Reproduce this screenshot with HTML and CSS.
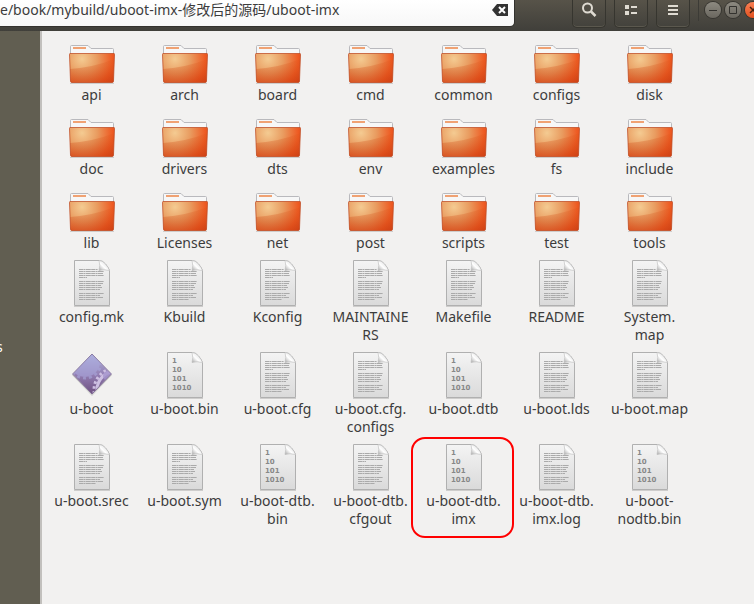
FILE: index.html
```
<!DOCTYPE html>
<html lang="zh-CN">
<head>
<meta charset="utf-8">
<title>uboot-imx</title>
<link rel="stylesheet" href="styles.css">
</head>
<body>
<svg class="defs" aria-hidden="true">
  <defs>
    <radialGradient id="orange" gradientUnits="userSpaceOnUse" cx="14" cy="25" r="38">
      <stop offset="0" stop-color="#f4cb92"/><stop offset=".4" stop-color="#e99c60"/><stop offset=".8" stop-color="#ee5a22"/><stop offset="1" stop-color="#d9481a"/>
    </radialGradient>
    <linearGradient id="shade" x1="0" y1="0" x2="0" y2="1">
      <stop offset="0" stop-color="#d8561a" stop-opacity=".15"/><stop offset="1" stop-color="#c83c10" stop-opacity=".5"/>
    </linearGradient>
    <linearGradient id="paper" x1="0" y1="0" x2="0" y2="1">
      <stop offset="0" stop-color="#f4f4f4"/><stop offset="1" stop-color="#dadada"/>
    </linearGradient>
    <linearGradient id="fold" x1="0" y1="1" x2="1" y2="0">
      <stop offset="0" stop-color="#a5a5a5"/><stop offset=".4" stop-color="#fff"/><stop offset="1" stop-color="#ccc"/>
    </linearGradient>
    <linearGradient id="violet" x1="0" y1="0" x2="0" y2="1">
      <stop offset="0" stop-color="#b9c6ea"/><stop offset=".5" stop-color="#9480b5"/><stop offset="1" stop-color="#62406f"/>
    </linearGradient>
    <clipPath id="diamond"><path d="M24 6 43 26 24 46 5 26z"/></clipPath>
    <symbol id="folder" viewBox="0 0 48 52">
      <path d="M2 49.500h44" stroke="#000" stroke-opacity=".15"/>
      <path d="M2.500 22V12.500q0-1 1-1H20l3 3h21.500q1 0 1 1V22z" fill="#f7f7f7" stroke="#b9b9bd"/>
      <path d="M5 14h13" stroke="#f0a273" stroke-width="2"/>
      <path d="M2 19.500h44q.6 0 .5 1L45.500 47q0 1.500-1.500 1.500H4Q2.500 48.500 2.500 47l-1-26.500q0-1 .5-1z" fill="url(#orange)"/>
      <path d="M2 35Q27 33 46 25l-.5 22q0 1.500-1.500 1.500H4Q2.500 48.500 2.500 47z" fill="url(#shade)"/>
      <path d="M2 19.500h44q.6 0 .5 1L45.500 47q0 1.500-1.500 1.500H4Q2.500 48.500 2.500 47l-1-26.500q0-1 .5-1z" fill="none" stroke="#bd4921" stroke-opacity=".75"/>
    </symbol>
    <symbol id="sheet" viewBox="0 0 48 52">
      <path d="M6 50.500h36" stroke="#000" stroke-opacity=".15"/>
      <path d="M6.500 4.500h25q3 0 6 3.500t4 6.500v35h-35z" fill="url(#paper)" stroke="#b0b0b0"/>
      <path d="M31 4.500q1.500 5 0 10 5-1.500 10.500 0-1-3-4-6.500T31 4.500z" fill="url(#fold)" stroke="#bbb" stroke-width=".6"/>
    </symbol>
    <symbol id="text" viewBox="0 0 48 52">
      <use href="#sheet"/>
      <path d="M11 13.500h19M11 15.500h25M11 17.500h24M11 19.500h25M11 21.500h8M11 25.500h25M11 27.500h24M11 29.500h22M11 31.500h23M11 33.500h21M11 37.500h25M11 39.500h21M11 41.500h24M11 43.500h17" stroke="#aaa" stroke-dasharray="4 .4 2 .4 5 .4"/>
    </symbol>
    <symbol id="binary" viewBox="0 0 48 52">
      <use href="#sheet"/>
      <g class="bits"><text x="11" y="15">1</text><text x="11" y="24">10</text><text x="11" y="33">101</text><text x="11" y="42">1010</text></g>
    </symbol>
    <symbol id="program" viewBox="0 0 48 52">
      <path d="M24 7 44 27 24 48 4 27z" fill="#000" opacity=".15"/>
      <g clip-path="url(#diamond)">
        <path d="M0 0h48v52H0z" fill="url(#violet)"/>
        <g opacity=".6">
          <circle cx="17" cy="14" r="15" fill="#aaa8dc"/>
          <circle cx="17" cy="14" r="16" fill="none" stroke="#aaa8dc" stroke-width="3" stroke-dasharray="3 3"/>
        </g>
        <circle cx="48" cy="42" r="19" fill="none" stroke="#cdbfe2" stroke-width="3"/>
        <circle cx="48" cy="42" r="22" fill="none" stroke="#cdbfe2" stroke-width="3" stroke-dasharray="2.500 2.500"/>
        <circle cx="40" cy="28" r="5" fill="#a493cc" opacity=".8"/>
      </g>
      <path d="M24 6 43.500 26 24 46 4.500 26z" fill="none" stroke="#76628f" stroke-opacity=".75" stroke-linejoin="round"/>
    </symbol>
  </defs>
</svg>

<header class="bar">
  <div class="location">
    <input class="path" type="text" aria-label="Location" value="e/book/mybuild/uboot-imx-修改后的源码/uboot-imx">
    <button class="clear" aria-label="Clear"><svg width="16" height="12"><path d="M5 0h11v12H5L0 6z" fill="#333"/><path d="m7 3 6 6m0-6-6 6" stroke="#fff" stroke-width="2"/></svg></button>
  </div>
  <div class="tools">
    <button class="tool" aria-label="Search"><svg width="16" height="16"><circle cx="6.500" cy="6" r="4.500" fill="none" stroke="#dfdbd2" stroke-width="2"/><path d="m10 9.500 4.500 4.500" stroke="#dfdbd2" stroke-width="2.500"/></svg></button>
    <button class="tool" aria-label="View"><svg width="16" height="16"><path d="M2 3h4v4H2zm6 1h6v2H8zM2 9h4v4H2zm6 1h6v2H8z" fill="#dfdbd2"/></svg></button>
    <button class="tool" aria-label="Menu"><svg width="16" height="16"><path d="M3 3h10v2H3zm0 4h10v2H3zm0 4h10v2H3z" fill="#dfdbd2"/></svg></button>
  </div>
  <div class="window">
    <button class="dot" aria-label="Minimize"><svg width="16" height="16"><path d="M4 8.500h8" stroke="#33322e"/></svg></button>
    <button class="dot" aria-label="Maximize"><svg width="16" height="16"><path d="M4.500 4.500h7v7h-7z" fill="none" stroke="#33322e"/></svg></button>
    <button class="dot close" aria-label="Close"><svg width="16" height="16"><path d="m5 5 6 6m0-6-6 6" stroke="#42200f" stroke-width="1.500"/></svg></button>
  </div>
</header>

<div class="body">
  <nav class="side"><span>s</span></nav>
  <main>
    <ul class="files">
      <li><svg><use href="#folder"/></svg><span>api</span></li>
      <li><svg><use href="#folder"/></svg><span>arch</span></li>
      <li><svg><use href="#folder"/></svg><span>board</span></li>
      <li><svg><use href="#folder"/></svg><span>cmd</span></li>
      <li><svg><use href="#folder"/></svg><span>common</span></li>
      <li><svg><use href="#folder"/></svg><span>configs</span></li>
      <li><svg><use href="#folder"/></svg><span>disk</span></li>
      <li><svg><use href="#folder"/></svg><span>doc</span></li>
      <li><svg><use href="#folder"/></svg><span>drivers</span></li>
      <li><svg><use href="#folder"/></svg><span>dts</span></li>
      <li><svg><use href="#folder"/></svg><span>env</span></li>
      <li><svg><use href="#folder"/></svg><span>examples</span></li>
      <li><svg><use href="#folder"/></svg><span>fs</span></li>
      <li><svg><use href="#folder"/></svg><span>include</span></li>
      <li><svg><use href="#folder"/></svg><span>lib</span></li>
      <li><svg><use href="#folder"/></svg><span>Licenses</span></li>
      <li><svg><use href="#folder"/></svg><span>net</span></li>
      <li><svg><use href="#folder"/></svg><span>post</span></li>
      <li><svg><use href="#folder"/></svg><span>scripts</span></li>
      <li><svg><use href="#folder"/></svg><span>test</span></li>
      <li><svg><use href="#folder"/></svg><span>tools</span></li>
      <li><svg><use href="#text"/></svg><span>config.mk</span></li>
      <li><svg><use href="#text"/></svg><span>Kbuild</span></li>
      <li><svg><use href="#text"/></svg><span>Kconfig</span></li>
      <li><svg><use href="#text"/></svg><span>MAINTAINE<br>RS</span></li>
      <li><svg><use href="#text"/></svg><span>Makefile</span></li>
      <li><svg><use href="#text"/></svg><span>README</span></li>
      <li><svg><use href="#text"/></svg><span>System.<br>map</span></li>
      <li><svg><use href="#program"/></svg><span>u-boot</span></li>
      <li><svg><use href="#binary"/></svg><span>u-boot.bin</span></li>
      <li><svg><use href="#text"/></svg><span>u-boot.cfg</span></li>
      <li><svg><use href="#text"/></svg><span>u-boot.cfg.<br>configs</span></li>
      <li><svg><use href="#binary"/></svg><span>u-boot.dtb</span></li>
      <li><svg><use href="#text"/></svg><span>u-boot.lds</span></li>
      <li><svg><use href="#text"/></svg><span>u-boot.map</span></li>
      <li><svg><use href="#text"/></svg><span>u-boot.srec</span></li>
      <li><svg><use href="#text"/></svg><span>u-boot.sym</span></li>
      <li><svg><use href="#binary"/></svg><span>u-boot-dtb.<br>bin</span></li>
      <li><svg><use href="#text"/></svg><span>u-boot-dtb.<br>cfgout</span></li>
      <li class="marked"><svg><use href="#binary"/></svg><span>u-boot-dtb.<br>imx</span></li>
      <li><svg><use href="#text"/></svg><span>u-boot-dtb.<br>imx.log</span></li>
      <li><svg><use href="#binary"/></svg><span>u-boot-<br>nodtb.bin</span></li>
    </ul>
  </main>
</div>
</body>
</html>
```
FILE: styles.css
```
* { box-sizing: border-box; }
body {
  margin: 0;
  min-height: 100vh;
  display: flex;
  flex-direction: column;
  overflow: hidden;
  background: #f2f1f0;
  color: #3c3c3c;
  font: 14px/18px "Noto Sans", "Noto Sans CJK SC", sans-serif;
}
.defs { position: absolute; width: 0; height: 0; }
button { padding: 0; border: 0; background: none; }
button svg { display: block; }

.bar {
  display: flex;
  align-items: flex-start;
  height: 31px;
  overflow: hidden;
  background: linear-gradient(#575349, #403f3a);
}
.location {
  flex: 1;
  display: flex;
  align-items: center;
  height: 27px;
  padding: 0 6px 6px 0;
  background: linear-gradient(#fff, #f7f7f7);
  border: solid #33322e;
  border-width: 0 1px 1px 0;
  border-radius: 0 0 5px 0;
}
.path {
  flex: 1;
  min-width: 0;
  padding: 0;
  border: 0;
  outline: 0;
  background: none;
  color: #3c3c3c;
  font: inherit;
}
.tools { display: flex; gap: 8px; margin: 0 8px 0 57px; }
.tool {
  display: flex;
  justify-content: center;
  width: 34px;
  height: 28px;
  padding-top: 2px;
  border: solid #36352f;
  border-width: 0 1px 1px;
  border-radius: 0 0 5px 5px;
  box-shadow: inset 0 -1px #5b584e;
}
.window {
  display: flex;
  gap: 4px;
  margin-right: -7px;
  padding: 2px 0 3px 6px;
  border-left: 1px solid #3c3b36;
}
.dot {
  width: 16px;
  height: 16px;
  border-radius: 50%;
  background: linear-gradient(#8d8a81, #6a675f);
  box-shadow: 0 0 0 1px #363530;
}
.close { background: linear-gradient(#f88055, #e2511f); }

.body { flex: 1; display: flex; }
.side {
  flex: none;
  width: 42px;
  padding-top: 307px;
  background: #615e51;
  border-right: 2px solid #c2c0bd;
  color: #fff;
}
.side span { display: block; margin-left: -4px; }
main { flex: 1; padding: 3px; }
.files {
  display: grid;
  grid-template-columns: repeat(auto-fill, 93px);
  row-gap: 4px;
  margin: 0;
  padding: 0;
  list-style: none;
}
.files li {
  position: relative;
  display: flex;
  flex-direction: column;
  align-items: center;
  text-align: center;
}
.files svg { width: 48px; height: 52px; }
.bits { font: bold 7px "DejaVu Sans", sans-serif; fill: #888; }
.marked::after {
  content: "";
  position: absolute;
  inset: -3px -4px -10px -6px;
  border: 2px solid #f00;
  border-radius: 14px;
}
```
